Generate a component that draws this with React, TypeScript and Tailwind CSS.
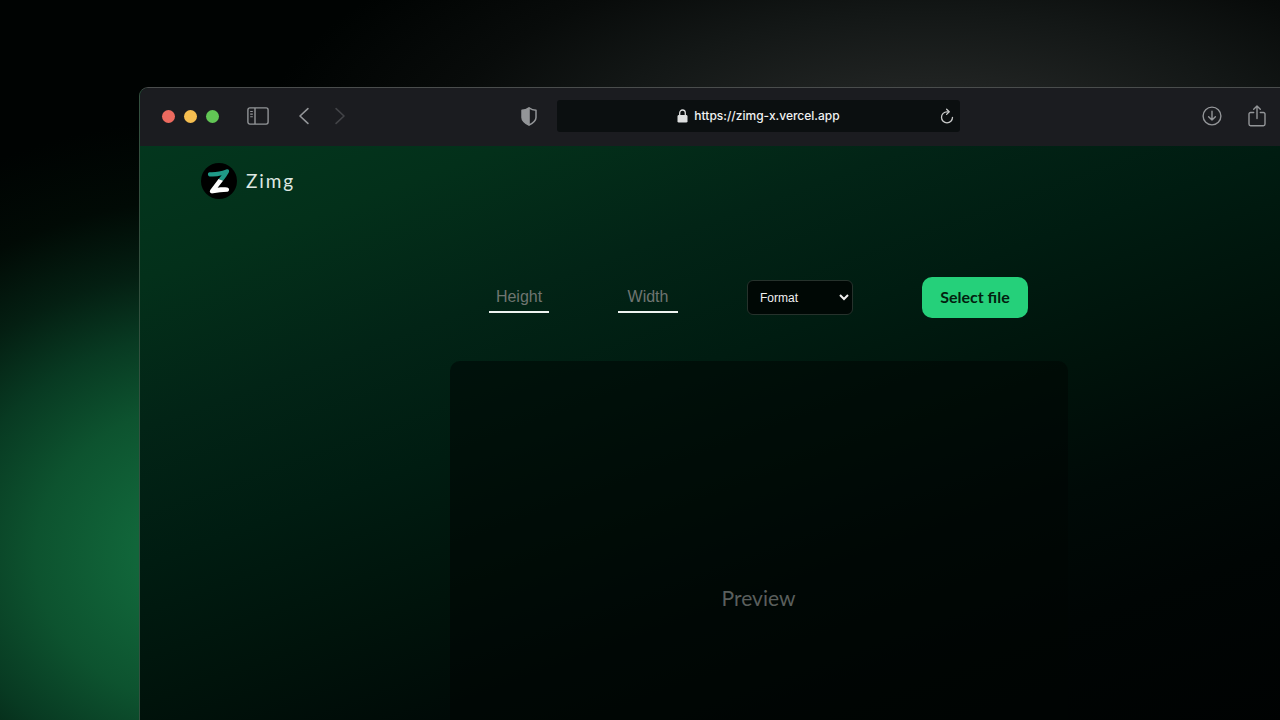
import { useState } from "react";

function WindowControls() {
  return (
    <div className="flex items-center gap-[9px]">
      <span className="size-[13px] rounded-full bg-[#ed6a5f]" />
      <span className="size-[13px] rounded-full bg-[#f6be50]" />
      <span className="size-[13px] rounded-full bg-[#62c655]" />
    </div>
  );
}

function Toolbar() {
  return (
    <div className="grid h-[58px] shrink-0 grid-cols-[1fr_403px_1fr] items-center bg-[#1b1c20] pb-[2px] text-[#939598]">
      <div className="flex items-center pr-5 pl-[22px]">
        <WindowControls />
        <button type="button" aria-label="Show sidebar" className="ml-7">
          <svg width="22" height="18" viewBox="0 0 22 18" fill="none" stroke="currentColor" strokeWidth="1.4">
            <rect x="0.9" y="0.9" width="20.2" height="16.2" rx="2" />
            <path d="M8 1v16" />
            <path d="M3.2 4.5h2.6M3.2 7.1h2.6M3.2 9.7h2.6" strokeWidth="1.1" />
          </svg>
        </button>
        <button type="button" aria-label="Back" className="ml-[30px]">
          <svg width="10" height="18" viewBox="0 0 10 18" fill="none" stroke="currentColor" strokeWidth="1.6" strokeLinecap="round" strokeLinejoin="round">
            <path d="M8.900 1.600 1 9l7.900 7.400" />
          </svg>
        </button>
        <button type="button" aria-label="Forward" className="ml-[26px] text-[#424347]">
          <svg width="10" height="18" viewBox="0 0 10 18" fill="none" stroke="currentColor" strokeWidth="1.6" strokeLinecap="round" strokeLinejoin="round">
            <path d="M1.100 1.600 9 9l-7.900 7.400" />
          </svg>
        </button>
        <button type="button" aria-label="Privacy report" className="ml-auto">
          <svg width="16" height="19" viewBox="0 0 16 19" fill="none">
            <path d="M8 .8c2.200 1.500 4.500 2.300 7 2.500v7.100c0 3.600-3.700 6-7 7.800-3.300-1.800-7-4.200-7-7.800V3.300C3.500 3.100 5.800 2.300 8 .8z" stroke="currentColor" strokeWidth="1.500" strokeLinejoin="round" />
            <path d="M8.800 .8v17.400H8c-3.300-1.800-7-4.200-7-7.800V3.300C3.500 3.100 5.800 2.300 8 .8z" fill="currentColor" />
          </svg>
        </button>
      </div>
      <div className="flex h-8 items-center rounded-[3px] bg-[#0b0f10] pr-[6px] pl-5 text-[#f1f2f2]">
        <div className="flex flex-1 items-center justify-center gap-[6px]">
          <svg width="11" height="14" viewBox="0 0 11 14" fill="none">
            <rect x="0.500" y="6" width="10" height="7.600" rx="1.400" fill="#dedfdf" />
            <path d="M2.700 6.500V4a2.800 3 0 0 1 5.600 0v2.500" stroke="#dedfdf" strokeWidth="1.300" />
          </svg>
          <span className="font-['Inter',sans-serif] text-xs leading-5 font-medium">https://zimg-x.vercel.app</span>
        </div>
        <button type="button" aria-label="Reload">
          <svg width="14" height="16" viewBox="0 0 14 16" fill="none" stroke="#c9caca" strokeWidth="1.300" strokeLinecap="round" strokeLinejoin="round">
            <path d="M8.700 3.800H7A5.500 5.500 0 1 0 12.500 9.300" />
            <path d="M6.600 1.200 9.200 3.800 6.600 6.400" />
          </svg>
        </button>
      </div>
      <div className="flex items-center justify-end gap-[26px] pr-[111px]">
        <button type="button" aria-label="Downloads">
          <svg width="20" height="20" viewBox="0 0 20 20" fill="none" stroke="currentColor" strokeWidth="1.400" strokeLinecap="round" strokeLinejoin="round">
            <circle cx="10" cy="10" r="8.900" />
            <path d="M10 5.300v8.700M6.600 10.700l3.400 3.400 3.400-3.400" />
          </svg>
        </button>
        <button type="button" aria-label="Share">
          <svg width="18" height="22" viewBox="0 0 18 22" fill="none" stroke="currentColor" strokeWidth="1.400" strokeLinecap="round" strokeLinejoin="round">
            <path d="M5.700 7.500H2.600A1.600 1.600 0 0 0 1 9.100v10A1.600 1.600 0 0 0 2.600 20.700h12.800a1.600 1.600 0 0 0 1.600-1.600v-10a1.600 1.600 0 0 0-1.600-1.600h-3.100" />
            <path d="M9 13.500V1.200M5.700 4.300 9 1l3.300 3.300" />
          </svg>
        </button>
      </div>
    </div>
  );
}

function Brand() {
  return (
    <a href="#" className="flex items-center gap-[9px] text-[#dfe8e2]">
      <svg width="36" height="36" viewBox="0 0 36 36" fill="none">
        <circle cx="18" cy="18" r="18" fill="#000" />
        <path
          d="M8.600 9.200c5.900.3 11-.6 16.600-2.700 2.200-.8 3.700.8 2.600 2.900-1.600 3-3.600 5.800-5.700 8.400l-4.600-1.700c1.200-1.400 2.200-2.500 3.200-3.800-3.900 1.100-7.700 1.400-11.900 1.100-2.300-.2-2.600-4.200-.2-4.200z"
          fill="#1f9a88"
        />
        <path
          d="M17.500 16.100 22.100 17.800c-1.900 2.500-3.700 4.700-5.500 6.900 3.200-.4 6.300-.5 9.500-.2 2.500.2 2.700 4 .2 4.200-5.100.3-9.400.6-14.200 1.600-2.900.6-4.200-1.500-2.500-3.700 2.700-3.600 5.300-7 7.900-10.500z"
          fill="#fff"
        />
      </svg>
      <span className="font-['Lato',sans-serif] text-[19px] leading-7 tracking-widest">Zimg</span>
    </a>
  );
}

export default function App() {
  const [height, setHeight] = useState("");
  const [width, setWidth] = useState("");
  const field =
    "h-[30px] w-[60px] border-b-2 border-[#eef3f0] bg-transparent text-center font-['Liberation_Sans',Arial,sans-serif] text-base text-white outline-none placeholder:text-[#6f7571]";

  return (
    <div className="flex h-screen flex-col overflow-hidden bg-[#000302] bg-[radial-gradient(ellipse_420px_350px_at_220px_555px,#13693b_0%,#11663a_20%,#0d532f_44%,#083a22_64%,#041f12_82%,#010a05_102%,transparent_125%),radial-gradient(ellipse_560px_230px_at_930px_150px,#282b2a_0%,#202322_28%,#131716_60%,#080b0a_88%,transparent_120%)] pt-[87px] pl-[139px]">
      <div className="-mr-[98px] flex flex-1 flex-col overflow-hidden rounded-tl-[9px] rounded-tr-[9px] border border-b-0 border-t-[#4a4d4d] border-l-[#33503f] border-r-[#33503f] bg-[linear-gradient(160deg,#03391f_0px,#03301a_180px,#022416_320px,#001c11_450px,#00130b_580px,#000a07_700px,#000504_820px,#000202_1000px)]">
        <Toolbar />
        <header className="px-[61px] pt-[17px]">
          <div className="flex">
            <Brand />
          </div>
        </header>
        <main className="flex flex-col items-center pt-[78px]">
          <form className="flex items-center gap-[69px]" onSubmit={(e) => e.preventDefault()}>
            <input
              type="text"
              aria-label="Height"
              placeholder="Height"
              value={height}
              onChange={(e) => setHeight(e.target.value)}
              className={field}
            />
            <input
              type="text"
              aria-label="Width"
              placeholder="Width"
              value={width}
              onChange={(e) => setWidth(e.target.value)}
              className={field}
            />
            <select
              aria-label="Format"
              className="h-[35px] w-[106px] rounded-md border border-[#26322c] bg-[#000805] pl-2 font-['Liberation_Sans',Arial,sans-serif] text-xs text-[#f0f0f0]"
            >
              <option>Format</option>
            </select>
            <button
              type="button"
              className="h-[41px] w-[106px] rounded-[10px] bg-[#25d07a] pb-[2px] font-['Lato',sans-serif] text-base font-bold text-[#03200f]"
            >
              Select file
            </button>
          </form>
          <section className="mt-[43px] flex h-[474px] w-[618px] shrink-0 items-center justify-center rounded-[10px] bg-[#000504]/55">
            <p className="font-['Lato',sans-serif] text-[21px] leading-8 text-[#5a5f5d]">Preview</p>
          </section>
        </main>
      </div>
    </div>
  );
}
